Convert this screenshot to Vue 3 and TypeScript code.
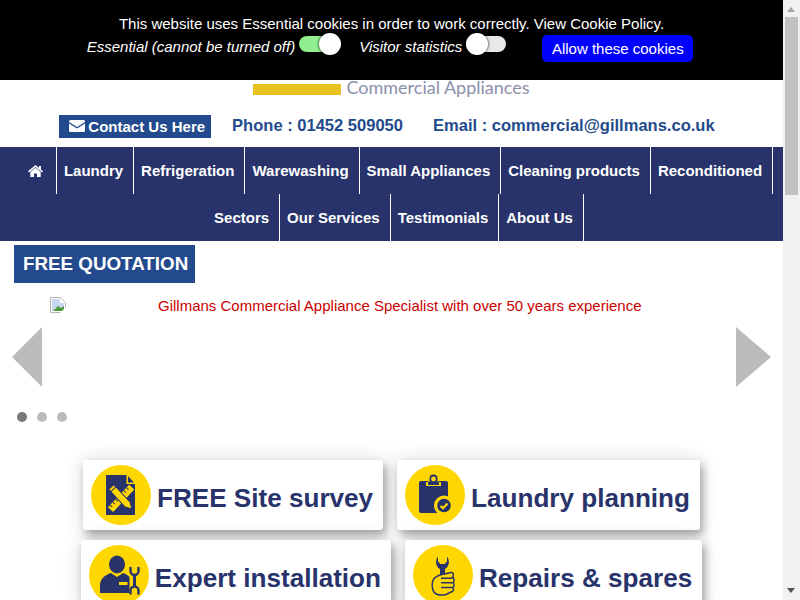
<template>
  <div class="page">
    <div class="cookie-bar">
      <p class="cookie-line">This website uses Essential cookies in order to work correctly. View Cookie Policy.</p>
      <div class="cookie-opts">
        <em>Essential (cannot be turned off)</em>
        <span class="toggle on"><i></i></span>
        <em class="second">Visitor statistics</em>
        <span class="toggle"><i></i></span>
        <button class="allow" type="button">Allow these cookies</button>
      </div>
    </div>

    <header class="logo">
      <span class="logo-bar"></span>
      <span class="logo-text">Commercial Appliances</span>
    </header>

    <div class="contact">
      <a class="contact-btn">
        <svg width="16" height="12" viewBox="0 0 16 12"><path fill="#fff" d="M1.500 0h13A1.500 1.500 0 0 1 16 1.500v.4L8 7 0 1.900v-.4A1.500 1.500 0 0 1 1.500 0zM0 3.500l8 5 8-5v7a1.500 1.500 0 0 1-1.500 1.500h-13A1.500 1.500 0 0 1 0 10.500z"/></svg>
        Contact Us Here
      </a>
      <span class="phone">Phone : 01452 509050</span>
      <span class="email">Email : commercial@gillmans.co.uk</span>
    </div>

    <nav class="nav">
      <a class="nav-item home">
        <svg width="15" height="12" viewBox="0 0 15 12">
          <path fill="#fff" d="M7.500 0L15 6.300l-1 1.100L7.500 2 1 7.400 0 6.300z"/>
          <rect x="11" y="1" width="2" height="3" fill="#fff"/>
          <path fill="#fff" d="M2.300 7.100l5.200-4.300 5.200 4.300V12H9V8.500H6V12H2.300z"/>
        </svg>
      </a>
      <a v-for="item in navRow1" :key="item" class="nav-item">{{ item }}</a>
      <span class="nav-break"></span>
      <a v-for="item in navRow2" :key="item" class="nav-item">{{ item }}</a>
    </nav>

    <div class="quote-row">
      <a class="quote">FREE QUOTATION</a>
    </div>

    <section class="slider">
      <div class="slide">
        <svg class="broken" width="16" height="16" viewBox="0 0 16 16">
          <path fill="#fff" stroke="#b4b4b4" d="M.5.5h10l5 5v10H.5z"/>
          <path fill="#c8d8f0" d="M2 2h8v4h4v8H2z"/>
          <path fill="#4a9a3c" d="M3 14l5-5 3 2 3-2v5z"/>
          <path fill="#fff" d="M10 16l6-6v6z"/>
        </svg>
        <span class="alt">Gillmans Commercial Appliance Specialist with over 50 years experience</span>
      </div>
      <span class="arrow left"></span>
      <span class="arrow right"></span>
      <div class="dots">
        <span class="dot active"></span>
        <span class="dot"></span>
        <span class="dot"></span>
      </div>
    </section>

    <section class="cards">
      <div class="card">
        <span class="circle">
          <svg width="60" height="60" viewBox="0 0 60 60">
            <path fill="#28336b" d="M15 10h20.500v9H44v31H15z"/>
            <path fill="#28336b" d="M37 11l6 6.500h-6z"/>
            <g transform="rotate(43 30.500 33)">
              <rect x="27" y="18" width="7" height="31" fill="#ffd700"/>
              <path stroke="#28336b" stroke-width="1" d="M27 22h3M27 26h3M27 30h3M27 38h3M27 42h3M27 46h3"/>
            </g>
            <g transform="rotate(-43 30.500 33)">
              <path fill="#ffd700" stroke="#28336b" stroke-width="1" d="M27 18h7v24l-3.500 6-3.500-6z"/>
              <path stroke="#28336b" stroke-width="1" d="M27 21h7"/>
            </g>
          </svg>
        </span>
        <span class="label">FREE Site survey</span>
      </div>
      <div class="card">
        <span class="circle">
          <svg width="60" height="60" viewBox="0 0 60 60">
            <rect x="14" y="16" width="29" height="32" rx="2" fill="#28336b"/>
            <path fill="#ffd700" d="M21 21v-4h2.500v-3a5 5 0 0 1 10 0v3H36v4z"/>
            <path fill="#28336b" d="M23 20v-3h1.500v-3.500a4 4 0 0 1 8 0V17H34v3z"/>
            <circle cx="28.500" cy="14" r="2.400" fill="#ffd700"/>
            <circle cx="39" cy="40.500" r="10" fill="#ffd700"/>
            <circle cx="39" cy="40.500" r="6.800" fill="#28336b"/>
            <path fill="none" stroke="#ffd700" stroke-width="2.200" d="M35.500 41l2.500 2.200 4.500-4.700"/>
          </svg>
        </span>
        <span class="label">Laundry planning</span>
      </div>
      <div class="card">
        <span class="circle">
          <svg width="60" height="60" viewBox="0 0 60 60">
            <ellipse cx="28" cy="19.500" rx="8" ry="9" fill="#28336b"/>
            <path fill="#28336b" d="M11 48v-8c0-6 5-10 11-12l6 4 6-4c3 1 5 2 6.500 4v16z"/>
            <rect x="30" y="37" width="8.500" height="3" fill="#ffd700"/>
            <path fill="none" stroke="#ffd700" stroke-width="3" d="M45.500 22v27"/>
            <path fill="none" stroke="#28336b" stroke-width="2.400" stroke-linecap="round" d="M41.500 23v3a4 4 0 0 0 8 0v-3M41.500 48.500v-3a4 4 0 0 1 8 0v3"/>
            <path stroke="#28336b" stroke-width="3" d="M45.500 29v13"/>
          </svg>
        </span>
        <span class="label">Expert installation</span>
      </div>
      <div class="card">
        <span class="circle">
          <svg width="60" height="60" viewBox="0 0 60 60">
            <path fill="#28336b" d="M25 11.500c-3 4-2.500 10 2 12.500v7h5v-7c4.500-2.500 5-8.500 2-12.500v5l-2.500 2.500h-4L25 16.500z"/>
            <path fill="#ffd700" stroke="#28336b" stroke-width="1.500" d="M19.500 37c.5-4 4.500-6 7.500-7l11-2.500c2.500-.5 3 2.500 1.500 4.500 2 1 2 4.500.5 5.500 1.500 1 1.500 4 0 5 1 1.500.5 4.500-2 4.500l-5 2.500c-5 1-10 .5-12-2.500-2-3-2-7-1.500-10z"/>
            <path fill="none" stroke="#28336b" stroke-width="1.500" d="M28 33.300h11.500M28 37.700h12M28 42.400h12"/>
          </svg>
        </span>
        <span class="label">Repairs &amp; spares</span>
      </div>
    </section>

    <div class="scrollbar" aria-hidden="true">
      <span class="sb-up"></span>
      <span class="sb-thumb"></span>
      <span class="sb-down"></span>
    </div>
  </div>
</template>

<script setup lang="ts">
const navRow1: string[] = ['Laundry', 'Refrigeration', 'Warewashing', 'Small Appliances', 'Cleaning products', 'Reconditioned']
const navRow2: string[] = ['Sectors', 'Our Services', 'Testimonials', 'About Us']
</script>

<style scoped>
.page {
  min-height: 1900px;
  margin-right: 17px;
  font-family: "Liberation Sans", Arial, sans-serif;
  background: #fff;
}
.scrollbar {
  position: fixed;
  top: 0;
  right: 0;
  bottom: 0;
  width: 17px;
  background: #f1f1f1;
  z-index: 20;
}
.sb-thumb {
  position: absolute;
  top: 17px;
  left: 2px;
  width: 13px;
  height: 178px;
  background: #c1c1c1;
}
.sb-up,
.sb-down {
  position: absolute;
  left: 4px;
  width: 0;
  height: 0;
  border-left: 4px solid transparent;
  border-right: 4px solid transparent;
}
.sb-up {
  top: 7px;
  border-bottom: 5px solid #a3a3a3;
}
.sb-down {
  bottom: 7px;
  border-top: 5px solid #505050;
}
.cookie-bar {
  position: fixed;
  top: 0;
  left: 0;
  right: 17px;
  height: 80px;
  background: #000;
  color: #fff;
  font-size: 15px;
  text-align: center;
  z-index: 10;
}
.cookie-line {
  margin: 0;
  padding-top: 15px;
  line-height: 18px;
}
.cookie-opts {
  display: flex;
  justify-content: center;
  align-items: flex-start;
  margin-top: 2px;
  height: 30px;
  padding-right: 3px;
}
.cookie-opts em {
  line-height: 18px;
  margin-top: 3px;
}
.toggle {
  position: relative;
  display: block;
  width: 40px;
  height: 16px;
  margin: 1px 0 0 4px;
  border-radius: 8px;
  background: #e8e8e8;
}
.toggle.on {
  background: #90ee90;
}
.toggle i {
  position: absolute;
  top: -3px;
  left: 0;
  width: 22px;
  height: 22px;
  border-radius: 50%;
  background: #fff;
  box-shadow: 1px 0 2px rgba(0, 0, 0, 0.5);
}
.toggle.on i {
  left: 20px;
  box-shadow: -1px 0 2px rgba(0, 0, 0, 0.5);
}
.second {
  margin-left: 20px;
}
.allow {
  margin-left: 36px;
  height: 27px;
  width: 151px;
  padding: 0;
  border: none;
  border-radius: 5px;
  background: #00f;
  color: #fff;
  font: 15px "Liberation Sans", Arial, sans-serif;
}
.logo {
  display: flex;
  justify-content: center;
  align-items: center;
  height: 97px;
  padding-top: 80px;
  box-sizing: border-box;
}
.logo-bar {
  width: 88px;
  height: 11px;
  background: #e9c220;
  margin-right: 5px;
  margin-top: 1px;
}
.logo-text {
  margin-bottom: 2px;
  font-family: Lato, sans-serif;
  font-size: 18px;
  color: #8b90ab;
  line-height: 17px;
}
.contact {
  display: flex;
  justify-content: center;
  align-items: center;
  box-sizing: border-box;
  height: 50px;
  padding: 8px 9px 0 0;
  font-size: 16.55px;
  font-weight: bold;
  color: #224a8c;
}
.contact-btn {
  display: flex;
  align-items: center;
  gap: 3px;
  height: 23px;
  padding: 0 6px 0 10px;
  background: #224a8c;
  color: #fff;
  font-size: 15px;
}
.phone {
  margin-left: 21px;
}
.email {
  margin-left: 30px;
}
.nav {
  display: flex;
  flex-wrap: wrap;
  justify-content: center;
  padding-left: 8px;
  background: #28336b;
}
.nav-break {
  flex-basis: 100%;
  height: 0;
}
.nav-item {
  display: flex;
  align-items: center;
  height: 47px;
  padding: 0 10px 0 7px;
  border-right: 1px solid #fff;
  color: #fff;
  font-size: 15px;
  font-weight: bold;
}
.nav-item.home {
  padding: 0 13px 0 10px;
}
.quote-row {
  display: flex;
  padding: 4px 14px 0;
}
.quote {
  height: 38px;
  line-height: 38px;
  padding: 0 7px 0 9px;
  background: #224a8c;
  color: #fff;
  font-size: 18.8px;
  font-weight: bold;
}
.slider {
  position: relative;
  height: 177px;
}
.slide {
  display: flex;
  padding: 14px 0 0 50px;
}
.broken {
  flex: none;
}
.alt {
  margin-left: 92px;
  color: #c00;
  font-size: 15px;
  line-height: 17px;
}
.arrow {
  position: absolute;
  top: 44px;
  width: 0;
  height: 0;
  border-top: 30px solid transparent;
  border-bottom: 30px solid transparent;
}
.arrow.left {
  left: 12px;
  border-right: 30px solid #bbb;
}
.arrow.right {
  left: 736px;
  border-left: 35px solid #bbb;
}
.dots {
  position: absolute;
  left: 17px;
  top: 129px;
  display: flex;
  gap: 10px;
}
.dot {
  width: 10px;
  height: 10px;
  border-radius: 50%;
  background: #bbb;
}
.dot.active {
  background: #777;
}
.cards {
  display: flex;
  flex-wrap: wrap;
  justify-content: center;
  gap: 10px 14px;
}
.card {
  display: flex;
  align-items: center;
  height: 70px;
  padding: 0 10px 0 8px;
  border-radius: 3px;
  background: #fff;
  box-shadow: 3px 5px 8px rgba(0, 0, 0, 0.3), 0 0 20px rgba(0, 0, 0, 0.15);
  color: #28336b;
}
.circle {
  display: block;
  flex: none;
  width: 60px;
  height: 60px;
  border-radius: 50%;
  background: #ffd700;
}
.label {
  margin-left: 6px;
  padding-top: 6px;
  font-size: 26.1px;
  font-weight: bold;
  white-space: nowrap;
}
</style>
